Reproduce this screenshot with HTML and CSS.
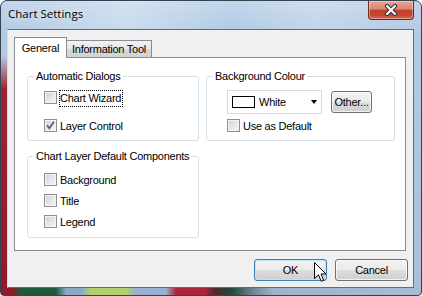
FILE: index.html
```html
<!DOCTYPE html>
<html lang="en">
<head>
  <meta charset="UTF-8" />
  <title>Chart Settings</title>
  <link rel="stylesheet" href="styles.css">
</head>
<body>

<div class="window">
  <div class="titlebar">
    <span class="title">Chart Settings</span>
    <button class="close" title="Close">
      <svg width="14" height="12" viewBox="0 0 14 12">
        <path d="M3 2 L11 10 M11 2 L3 10" stroke="#2b3140" stroke-width="4.2" stroke-linecap="round"/>
        <path d="M3 2 L11 10 M11 2 L3 10" stroke="#ffffff" stroke-width="2.2" stroke-linecap="round"/>
      </svg>
    </button>
  </div>

  <div class="client">
    <div class="tabs">
      <div class="tab tab-active">General</div>
      <div class="tab tab-info">Information Tool</div>
    </div>

    <div class="panel">
      <!-- automatic dialogs -->
      <fieldset class="group group-dialogs">
        <legend>Automatic Dialogs</legend>
        <div class="group-body rows-wide">
          <label class="check"><span class="cb"></span><span class="check-text focus">Chart Wizard</span></label>
          <label class="check"><span class="cb">
            <svg width="11" height="11" viewBox="0 0 11 11"><path d="M2 5.2 L4.3 8.3 L9 1.8" fill="none" stroke="#4b5d88" stroke-width="1.7"/></svg>
          </span><span class="check-text">Layer Control</span></label>
        </div>
      </fieldset>

      <!-- background colour -->
      <fieldset class="group group-colour">
        <legend>Background Colour</legend>
        <div class="group-body">
          <div class="colour-row">
            <div class="combo">
              <span class="swatch"></span>
              <span class="combo-text">White</span>
              <span class="combo-arrow"></span>
            </div>
            <button class="btn btn-other">Other...</button>
          </div>
          <label class="check"><span class="cb"></span><span class="check-text">Use as Default</span></label>
        </div>
      </fieldset>

      <!-- default components -->
      <fieldset class="group group-layers">
        <legend>Chart Layer Default Components</legend>
        <div class="group-body rows-tight">
          <label class="check"><span class="cb"></span><span class="check-text">Background</span></label>
          <label class="check"><span class="cb"></span><span class="check-text">Title</span></label>
          <label class="check"><span class="cb"></span><span class="check-text">Legend</span></label>
        </div>
      </fieldset>
    </div>

    <div class="actions">
      <button class="btn btn-default">OK</button>
      <button class="btn">Cancel</button>
    </div>
  </div>

  <svg class="cursor" width="13" height="21" viewBox="0 0 13 21">
    <path d="M0.5 0.5 V16.5 L4.5 12.8 L7.2 19.3 L9.6 18.3 L7 12 H12 Z" fill="#fff" stroke="#000" stroke-width="1" stroke-linejoin="miter"/>
  </svg>
</div>

</body>
</html>
```

FILE: styles.css
```css
body {
  margin: 0;
  font-family: "Liberation Sans", Arial, sans-serif;
  font-size: 11px;
  letter-spacing: -0.25px;
  color: #000;
}
.window {
  position: relative;
  width: 422px;
  height: 296px;
  box-sizing: border-box;
  border: 1px solid #36424f;
  border-radius: 7px 7px 4px 4px;
  overflow: hidden;
  display: flex;
  flex-direction: column;
  background:
    linear-gradient(to right, #8a1c2a 0, #8d1b2a 12px, #1f5a3c 20px, #1f5a3c 55px, #8ca6c6 65px, #8ca6c6 80px, #b3d06f 90px, #b3d06f 125px, #97b0cf 135px, #97b0cf 165px, #a8283a 175px, #a8283a 203px, #4a2a2a 215px, #1e4e3a 232px, #6b7f8e 250px, #9db4cb 272px, #a5bcd3 100%) left bottom / 100% 8px no-repeat,
    linear-gradient(to bottom, rgba(154,36,51,0) 0, rgba(154,36,51,0) 55px, #9a2433 88px, #8f1b2a 100%) left top / 7px 100% no-repeat,
    linear-gradient(to right, rgba(255,255,255,0) 0, rgba(255,255,255,.3) 30%, rgba(255,255,255,0) 55%, rgba(255,255,255,.2) 75%, rgba(255,255,255,0) 100%) left top / 100% 29px no-repeat,
    linear-gradient(to bottom, #c2d6eb 0, #b3cbe4 28px, #a8bfd7 100%);
}

/* title bar */
.titlebar {
  height: 28px;
  flex: none;
  display: flex;
  justify-content: space-between;
  align-items: flex-start;
  padding-left: 7px;
}
.title {
  padding-top: 5px;
  font-family: "Open Sans", "Noto Sans", sans-serif;
  font-size: 11.5px;
  letter-spacing: 0;
  line-height: 16px;
  text-shadow: 0 0 6px rgba(255,255,255,.8);
}
.close {
  width: 46px;
  height: 19px;
  margin-right: 7px;
  padding: 0;
  display: flex;
  align-items: center;
  justify-content: center;
  border: 1px solid #6a2b22;
  border-top: none;
  border-radius: 0 0 4px 4px;
  background: linear-gradient(#e6a898 0, #d9846f 45%, #c2402b 52%, #c64731 80%, #d96e56 100%);
  box-shadow: inset 0 0 0 1px rgba(255,255,255,.35);
}

/* client area */
.client {
  flex: 1;
  margin: 0 7px 7px 6px;
  background: #f0f0f0;
  border: 1px solid #5f6c7a;
  border-left-color: #d9e0e8;
  display: flex;
  flex-direction: column;
}
.tabs {
  display: flex;
  align-items: flex-end;
  padding: 7px 0 0 6px;
}
.tab {
  box-sizing: border-box;
  border: 1px solid #898c95;
  border-bottom: none;
  text-align: center;
  line-height: 15px;
}
.tab-active {
  position: relative;
  z-index: 1;
  width: 53px;
  height: 21px;
  margin-bottom: -1px;
  padding-top: 3px;
  background: #fff;
}
.tab-info {
  width: 86px;
  height: 17px;
  margin-left: -1px;
  padding-top: 1px;
  background: linear-gradient(#f2f2f2, #e6e6e6 50%, #d9d9d9 50%, #d2d2d2);
}
.panel {
  width: 392px;
  height: 194px;
  margin-left: 6px;
  box-sizing: border-box;
  border: 1px solid #898c95;
  background: #fff;
  padding: 12px 0 0 12px;
  display: grid;
  grid-template-columns: 172px 189px;
  column-gap: 7px;
  row-gap: 9px;
  align-content: start;
}

/* group boxes */
.group {
  margin: 0;
  min-width: 0;
  box-sizing: border-box;
  border: 1px solid #d5dfe5;
  border-radius: 3px;
  padding: 0 0 0 6px;
}
.group legend {
  padding: 0 2px;
  line-height: 13px;
}
.group-dialogs {
  grid-column: 1;
  grid-row: 1;
  height: 71px;
}
.group-colour {
  grid-column: 2;
  grid-row: 1;
  height: 71px;
}
.group-layers {
  grid-column: 1;
  grid-row: 2;
  height: 88px;
}
.group-body {
  display: flex;
  flex-direction: column;
  align-items: flex-start;
  padding: 7px 0 0 10px;
}
.rows-wide {
  gap: 11px;
}
.rows-tight {
  padding-top: 9px;
  gap: 4px;
}
.group-colour .group-body {
  padding-left: 14px;
  gap: 4px;
}

/* checkboxes */
.check {
  display: flex;
  align-items: flex-start;
}
.cb {
  width: 13px;
  height: 13px;
  margin-top: 1px;
  box-sizing: border-box;
  border: 1px solid #8e8f8f;
  background: linear-gradient(135deg, #cfd2d6, #f7f7f7);
  box-shadow: inset 0 0 0 1px #f4f4f4;
  display: flex;
}
.check-text {
  margin-left: 2px;
  padding: 0 1px 0 0;
  line-height: 15px;
  border: 1px dotted transparent;
}
.check-text.focus {
  border-color: #000;
}

/* colour picker */
.colour-row {
  display: flex;
  align-items: center;
  gap: 9px;
}
.combo {
  width: 95px;
  height: 24px;
  box-sizing: border-box;
  border: 1px solid #d6dbe0;
  background: #fff;
  display: flex;
  align-items: center;
  padding-left: 4px;
}
.swatch {
  width: 23px;
  height: 12px;
  box-sizing: border-box;
  border: 1px solid #000;
  background: #fff;
}
.combo-text {
  margin-left: 4px;
}
.combo-arrow {
  margin-left: auto;
  margin-right: 4px;
  border-top: 4px solid #000;
  border-left: 3.5px solid transparent;
  border-right: 3.5px solid transparent;
}

/* buttons */
.btn {
  font: inherit;
  letter-spacing: inherit;
  color: #000;
  padding: 0;
  height: 22px;
  border: 1px solid #707070;
  border-radius: 3px;
  background: linear-gradient(#f2f2f2 0, #ebebeb 48%, #dddddd 52%, #cfcfcf 100%);
  box-shadow: inset 0 0 0 1px rgba(255,255,255,.7);
}
.btn-other {
  width: 41px;
}
.actions {
  display: flex;
  justify-content: flex-end;
  gap: 8px;
  padding: 8px 5px 0 0;
}
.actions .btn {
  width: 73px;
}
.btn-default {
  border-color: #3c7fb1;
  box-shadow: inset 0 0 0 1px #bfe3f9;
}

.cursor {
  position: absolute;
  left: 313px;
  top: 261px;
}
```
